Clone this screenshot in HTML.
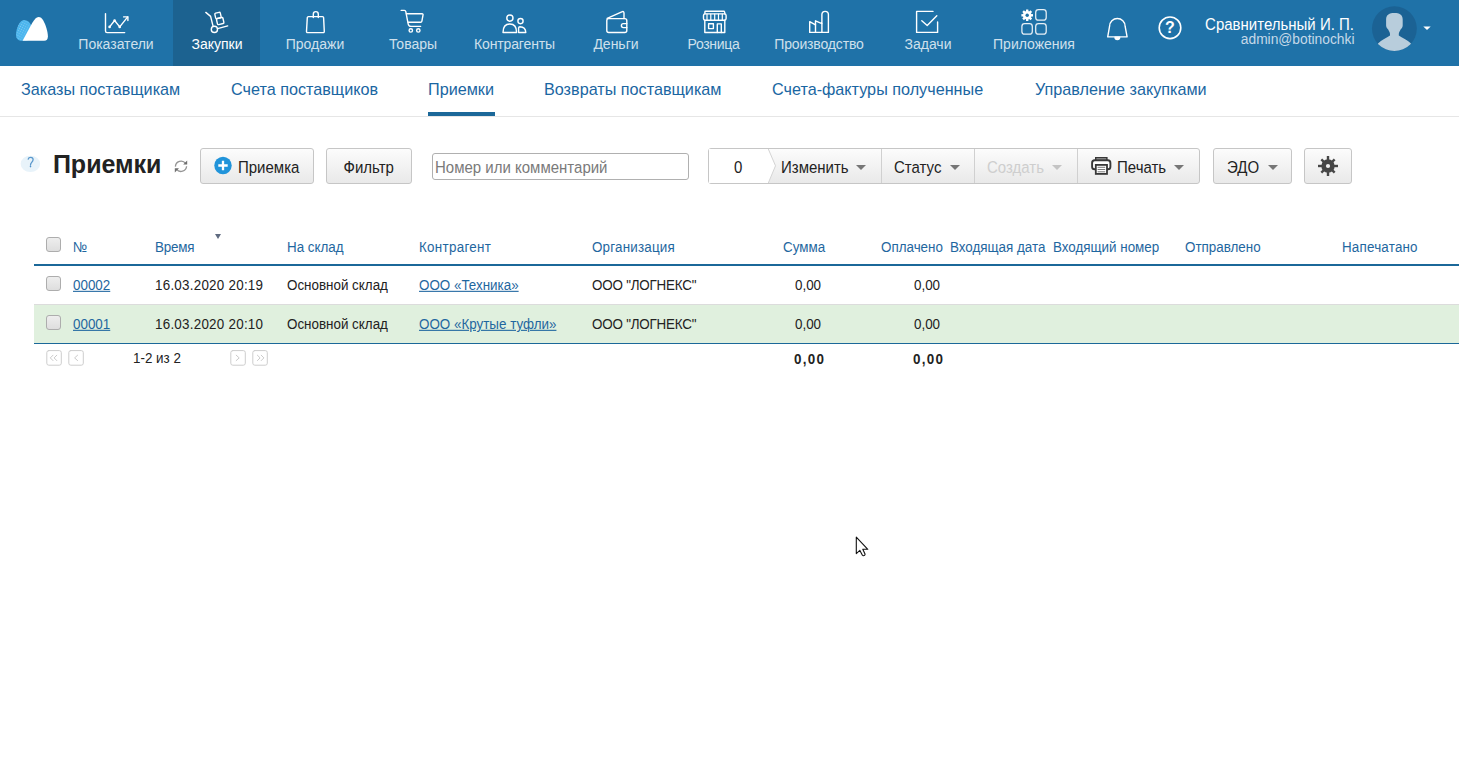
<!DOCTYPE html>
<html><head><meta charset="utf-8">
<style>
*{box-sizing:border-box}
html,body{margin:0;padding:0}
body{width:1459px;height:768px;overflow:hidden;background:#fff;position:relative;font-family:"Liberation Sans",sans-serif;color:#222}
.a{position:absolute;white-space:nowrap}
#hdr{position:absolute;left:0;top:0;width:1459px;height:66px;background:#1f72a8}
#act{position:absolute;left:173px;top:0;width:87px;height:66px;background:#1c6290}
.nt{position:absolute;top:37px;width:140px;text-align:center;font-size:14px;line-height:14px;color:#cfe0ec}
.ic{position:absolute;left:0;top:0}
.sn{position:absolute;top:81px;font-size:16.2px;line-height:16px;color:#1a66a2}
.btn{position:absolute;top:148px;height:36px;border:1px solid #c6c6c6;border-radius:3px;background:linear-gradient(#fcfcfc,#e9e9e9)}
.bt{position:absolute;top:158.5px;font-size:15px;line-height:15px;color:#222;transform:scaleY(1.09);transform-origin:0 3px}
.arr{position:absolute;width:0;height:0;border-left:5px solid transparent;border-right:5px solid transparent;border-top:5px solid #767676}
.th{position:absolute;top:240px;font-size:13.4px;line-height:13px;color:#1f67a0;transform:scaleY(1.08);transform-origin:0 2px}
.td{position:absolute;font-size:13.4px;line-height:13px;color:#222;transform:scaleY(1.08);transform-origin:0 2px}
.lnk{color:#1f67a0;text-decoration:underline}
.cb{position:absolute;left:46px;width:15px;height:15px;border:1px solid #adadad;border-radius:3px;background:linear-gradient(#eeeeee,#dedede)}
.pg{position:absolute;top:350px;width:16px;height:16px;border:1px solid #d8d8d8;border-radius:2px;background:#fff}
</style></head><body>
<div id="hdr"></div>
<div id="act"></div>

<!-- logo -->
<svg class="ic" width="60" height="60" style="left:0;top:0">
  <defs>
    <pattern id="dots" width="2.3" height="2.3" patternUnits="userSpaceOnUse" patternTransform="rotate(30)">
      <rect width="2.3" height="2.3" fill="#4db6ee"/>
      <circle cx="1.15" cy="1.15" r="0.45" fill="#8fd0f4"/>
    </pattern>
  </defs>
  <path d="M23.9 20 C19.8 20 16 28.5 16 35 C16 38.8 18.3 40.8 22 40.8 H26 C29.5 40.8 32 36 32 30 C32 24 28.3 20 23.9 20Z" fill="url(#dots)"/>
  <path d="M38.6 16.9 C36.2 16.9 34.2 19.4 32.2 23 L22.6 40.8 H44.2 C46.6 40.8 47.9 39.2 47.9 36.5 C47.9 31.5 45.6 24.5 43.3 20.4 C41.9 18 40.4 16.9 38.6 16.9 Z" fill="#fff"/>
</svg>

<!-- nav icons -->
<svg class="ic" width="1459" height="66" fill="none" stroke="#fff" stroke-width="1.4" stroke-linecap="round" stroke-linejoin="round">
  <!-- chart -->
  <path d="M105.5 13.6 V31 Q105.5 32.6 107.1 32.6 H124.7"/>
  <path d="M109.6 26.9 L114.6 20.5 L119.7 26.9 L127.7 16.9"/>
  <path d="M123.6 16.9 H127.9 V20.6"/>
  <circle cx="109.6" cy="26.9" r="0.6" fill="#fff"/><circle cx="114.6" cy="20.5" r="0.6" fill="#fff"/><circle cx="119.7" cy="26.9" r="0.6" fill="#fff"/>
  <!-- truck -->
  <path d="M205.8 12.4 L210.6 16.4 L213 25.8"/>
  <circle cx="214.4" cy="29.4" r="3.1"/>
  <path d="M217.6 28.6 L227.7 25.9"/>
  <g transform="rotate(-13 220 18)">
    <rect x="215.8" y="12.3" width="5.6" height="5.6" rx="1"/>
    <rect x="216.2" y="17.9" width="6.6" height="6.2" rx="1"/>
  </g>
  <!-- bag -->
  <path d="M308.4 16.6 H322.6 Q323.5 16.6 323.6 17.6 L324.3 31.4 Q324.4 32.6 323.2 32.6 H307.6 Q306.4 32.6 306.5 31.4 L307.3 17.6 Q307.4 16.6 308.4 16.6 Z"/>
  <path d="M313.3 17.6 V14.2 Q313.3 11.6 315.8 11.6 Q318.3 11.6 318.3 14.2 V17.6"/>
  <!-- cart -->
  <path d="M401.2 10.4 H404.4 Q405.5 10.4 405.8 11.6 L408.1 23.6 Q408.6 26.4 411 26.4 H420.6"/>
  <path d="M406.4 13.8 H422 Q423.3 13.8 423 15.2 L421.9 21.2 Q421.7 22.3 420.6 22.3 H408.2"/>
  <circle cx="410.8" cy="30.4" r="1.7"/><circle cx="418.3" cy="30.4" r="1.7"/>
  <!-- people -->
  <circle cx="509.9" cy="18.1" r="3.1"/>
  <path d="M503 32.5 Q503 24 509.8 24 Q516.6 24 516.6 32.5 Z"/>
  <circle cx="520.5" cy="21.1" r="2.6"/>
  <path d="M518.6 32.5 V28 Q518.6 26.7 520 26.7 Q525.6 26.9 525.8 32.5 Z"/>
  <!-- wallet -->
  <path d="M608.8 18.6 H624.8 Q626.8 18.6 626.8 20.6 V30.5 Q626.8 32.5 624.8 32.5 H608.8 Q606.8 32.5 606.8 30.5 V20.6 Q606.8 18.6 608.8 18.6Z"/>
  <path d="M607.2 18.4 L621.8 11.8 Q623.8 10.9 624 13 V18.6"/>
  <path d="M626.8 23.6 H623.3 Q621.4 23.6 621.4 25.6 Q621.4 27.6 623.3 27.6 H626.8"/>
  <!-- store -->
  <path d="M704.9 13.8 V12 Q704.9 11.3 705.6 11.3 H723.8 Q724.5 11.3 724.6 12 L724.9 13.8"/>
  <rect x="703.5" y="13.9" width="22.6" height="6.3" rx="1.6"/>
  <path d="M707 14.2 V19.9 M710.8 14.2 V19.9 M714.7 14.2 V19.9 M718.5 14.2 V19.9 M722.3 14.2 V19.9" stroke-width="1.2"/>
  <path d="M704.8 20.3 V32.5 H724.8 V20.3"/>
  <rect x="708.6" y="23.7" width="4.8" height="4.9"/>
  <path d="M717.3 32.5 V23.9 H721.3 V32.5"/>
  <!-- factory -->
  <path d="M809.7 32.4 V21.6 L815.5 24.8 V20.8 L821.9 23.6 V14.6 Q821.9 11.4 825.1 11.4 Q828.4 11.4 828.4 14.6 V32.4 Z"/>
  <path d="M815.5 24.8 V32.4 M821.9 23.6 V32.4"/>
  <!-- tasks -->
  <path d="M933 11.4 H916.6 V32.4 H937.6 V22"/>
  <path d="M921.8 20.8 L927.2 25.6 L936.8 15.8"/>
  <!-- apps -->
  <g stroke-width="1.25" stroke="#e8f0f6"><rect x="1035.7" y="9.7" width="10.5" height="10.5" rx="2.8"/>
  <rect x="1021.9" y="23.7" width="10.4" height="10.5" rx="2.8"/>
  <rect x="1035.7" y="23.7" width="10.5" height="10.5" rx="2.8"/></g>
  <!-- bell -->
  <path d="M1107.7 36.9 L1109.6 26.2 A7.75 7.75 0 0 1 1125.1 26.2 L1127.1 36.9 Z"/>
  <path d="M1115 37.2 A2.35 2.3 0 0 0 1119.7 37.2 Z" fill="#fff"/>
  <!-- help -->
  <circle cx="1170" cy="27.8" r="10.8" stroke-width="1.6"/>
</svg>
<!-- gear small in apps -->
<svg class="ic" width="1459" height="66" style="pointer-events:none">
  <g transform="translate(1027.2 15.3)" fill="#fff">
    <circle r="4.3"/>
    <g><rect x="-1.2" y="-5.8" width="2.4" height="11.6" rx="0.3"/><rect x="-1.2" y="-5.8" width="2.4" height="11.6" transform="rotate(45)"/><rect x="-1.2" y="-5.8" width="2.4" height="11.6" transform="rotate(90)"/><rect x="-1.2" y="-5.8" width="2.4" height="11.6" transform="rotate(135)"/></g>
    <circle r="1.7" fill="#1f72a8"/>
  </g>
  <text x="1170" y="33" font-family="Liberation Sans" font-weight="bold" font-size="16" fill="#fff" text-anchor="middle">?</text>
  <!-- avatar -->
  <circle cx="1394.4" cy="28.6" r="22.4" fill="#1b6294"/>
  <clipPath id="avc"><circle cx="1394.4" cy="28.6" r="22.4"/></clipPath>
  <g clip-path="url(#avc)" fill="#b8cddc">
    <path d="M1394.4 13.1 C1389.4 13.1 1386.1 14.8 1386.1 19.5 L1386.1 25.4 C1386.1 27.4 1387.4 28.4 1388.2 29.6 C1389 31.2 1389.9 32.4 1390 34 L1390 35.6 C1386.6 37.8 1381.6 40 1378 43.6 L1378 56 H1411 V43.6 C1407.2 40 1402.2 37.8 1398.8 35.6 L1398.8 34 C1398.9 32.4 1399.8 31.2 1400.6 29.6 C1401.4 28.4 1402.7 27.4 1402.7 25.4 L1402.7 19.5 C1402.7 14.8 1399.4 13.1 1394.4 13.1 Z"/>
  </g>
  <path d="M1423.3 26.4 H1430.7 L1427 30.1 Z" fill="#fff"/>
</svg>

<div class="nt" style="left:46px">Показатели</div>
<div class="nt" style="left:147px;color:#fff">Закупки</div>
<div class="nt" style="left:245px">Продажи</div>
<div class="nt" style="left:343px">Товары</div>
<div class="nt" style="left:444.5px;letter-spacing:-0.15px">Контрагенты</div>
<div class="nt" style="left:546px">Деньги</div>
<div class="nt" style="left:643.5px;letter-spacing:-0.3px">Розница</div>
<div class="nt" style="left:749px;letter-spacing:-0.15px">Производство</div>
<div class="nt" style="left:858px">Задачи</div>
<div class="nt" style="left:964px">Приложения</div>

<div class="a" style="right:105px;top:15.6px;font-size:15px;line-height:15px;color:#fff;transform:scaleY(1.07);transform-origin:0 2px">Сравнительный И. П.</div>
<div class="a" style="right:104.5px;top:33px;font-size:13.8px;line-height:14px;color:#c5d9e8">admin@botinochki</div>

<!-- subnav -->
<div class="sn" style="left:21px">Заказы поставщикам</div>
<div class="sn" style="left:231px">Счета поставщиков</div>
<div class="sn" style="left:428px">Приемки</div>
<div class="sn" style="left:544px">Возвраты поставщикам</div>
<div class="sn" style="left:772px">Счета-фактуры полученные</div>
<div class="sn" style="left:1035px">Управление закупками</div>
<div class="a" style="left:0;top:116px;width:1459px;height:1px;background:#e6e6e6"></div>
<div class="a" style="left:428px;top:112px;width:67px;height:4px;background:#1b6899"></div>

<!-- toolbar -->
<svg class="ic" style="left:16px;top:150px" width="30" height="28">
  <ellipse cx="14.4" cy="13.9" rx="9.7" ry="8.2" fill="#e8f3fa"/>
  <path d="M12.2 9.2 Q12.6 7.3 14.7 7.3 Q17.1 7.3 17.1 9.6 Q17.1 11.2 15.6 12.4 Q14.5 13.3 14.5 15.2" fill="none" stroke="#5a98cc" stroke-width="1.3" stroke-linecap="round"/>
  <circle cx="14.5" cy="16.6" r="0.8" fill="#4f90c8"/>
</svg>
<div class="a" style="left:52.9px;top:152px;font-size:25px;line-height:24px;font-weight:bold;color:#222">Приемки</div>
<svg class="ic" style="left:168px;top:152px" width="26" height="26" fill="none">
  <g stroke="#959595" stroke-width="1.3">
    <path d="M7.4 14.6 A5.7 5.7 0 0 1 17.6 11.4"/>
    <path d="M18.6 14.2 A5.7 5.7 0 0 1 8.4 17.2"/>
  </g>
  <path d="M19.2 8.6 V12.6 H15.2 Z" fill="#6f6f6f"/>
  <path d="M6.8 20.4 V16.2 H11 Z" fill="#6f6f6f"/>
</svg>

<div class="btn" style="left:200px;width:114px"></div>
<svg class="ic" style="left:213px;top:156px" width="20" height="20">
  <circle cx="10" cy="9.5" r="8.7" fill="#2194da"/>
  <path d="M10 4.8 V14.2 M5.3 9.5 H14.7" stroke="#fff" stroke-width="2.3"/>
</svg>
<div class="bt" style="left:238px">Приемка</div>

<div class="btn" style="left:326px;width:86px"></div>
<div class="bt" style="left:343.5px">Фильтр</div>

<div class="a" style="left:432px;top:153px;width:257px;height:27px;border:1px solid #b0b0b0;border-radius:3px;background:#fff"></div>
<div class="bt" style="left:435px;color:#7a7a7a">Номер или комментарий</div>

<!-- grouped toolbar -->
<div class="btn" style="left:708px;width:492px"></div>
<svg class="ic" style="left:709px;top:149px" width="68" height="34">
  <path d="M0 0 H59.3 L66.5 16.8 L59.3 34 H0 Z" fill="#fff"/>
  <path d="M59.3 0 L66.5 16.8 L59.3 34" fill="none" stroke="#d4d4d4" stroke-width="1"/>
</svg>
<div class="bt" style="left:734px">0</div>
<div class="bt" style="left:781px">Изменить</div>
<div class="arr" style="left:856.2px;top:164.8px"></div>
<div class="a" style="left:881px;top:149px;width:1px;height:34px;background:#d0d0d0"></div>
<div class="bt" style="left:894px">Статус</div>
<div class="arr" style="left:949.5px;top:164.8px"></div>
<div class="a" style="left:974px;top:149px;width:1px;height:34px;background:#d0d0d0"></div>
<div class="bt" style="left:987px;color:#cecece">Создать</div>
<div class="arr" style="left:1052.2px;top:164.8px;border-top-color:#c4c4c4"></div>
<div class="a" style="left:1077px;top:149px;width:1px;height:34px;background:#d0d0d0"></div>
<svg class="ic" style="left:1086px;top:152px" width="30" height="28">
  <rect x="9.7" y="5.7" width="11.2" height="3.6" fill="#b4b4b4" stroke="#383838" stroke-width="1.4"/>
  <rect x="6.1" y="8.3" width="18.3" height="9" rx="2.6" fill="#fff" stroke="#383838" stroke-width="1.9"/>
  <rect x="9.8" y="12.9" width="11.2" height="9" fill="#fff" stroke="#383838" stroke-width="1.8"/>
  <path d="M11.6 15.3 H19.2 M11.6 17.5 H19.2 M11.6 19.8 H19.2" stroke="#6a6a6a" stroke-width="0.9"/>
</svg>
<div class="bt" style="left:1117px">Печать</div>
<div class="arr" style="left:1174.2px;top:164.8px"></div>

<div class="btn" style="left:1213px;width:79px"></div>
<div class="bt" style="left:1227px">ЭДО</div>
<div class="arr" style="left:1267.6px;top:164.8px"></div>

<div class="btn" style="left:1304px;width:48px"></div>
<svg class="ic" style="left:1317px;top:155px" width="22" height="22">
  <g transform="translate(11 11)" fill="#474747">
    <circle r="6.7"/>
    <rect x="-1.2" y="-10" width="2.4" height="20"/><rect x="-1.2" y="-9.4" width="2.4" height="18.8" transform="rotate(45)"/><rect x="-1.2" y="-10" width="2.4" height="20" transform="rotate(90)"/><rect x="-1.2" y="-9.4" width="2.4" height="18.8" transform="rotate(135)"/>
    <circle r="2.1" fill="#f1f1f1"/>
  </g>
</svg>

<!-- table -->
<div class="cb" style="top:237px"></div>
<div class="th" style="left:73px">№</div>
<div class="th" style="left:155px;letter-spacing:-0.2px">Время</div>
<div class="arr" style="left:215px;top:234px;border-left-width:3.6px;border-right-width:3.6px;border-top:5px solid #5f6b80"></div>
<div class="th" style="left:287px">На склад</div>
<div class="th" style="left:419px;letter-spacing:0.3px">Контрагент</div>
<div class="th" style="left:592px;letter-spacing:0.2px">Организация</div>
<div class="th" style="left:783px">Сумма</div>
<div class="th" style="left:881px">Оплачено</div>
<div class="th" style="left:950px">Входящая дата</div>
<div class="th" style="left:1053px">Входящий номер</div>
<div class="th" style="left:1185px">Отправлено</div>
<div class="th" style="left:1342px;letter-spacing:0.2px">Напечатано</div>
<div class="a" style="left:34px;top:264px;width:1425px;height:2px;background:#1b6899"></div>

<div class="cb" style="top:276px"></div>
<div class="td" style="left:73px;top:278px"><span class="lnk">00002</span></div>
<div class="td" style="left:155px;top:278px;letter-spacing:0.25px">16.03.2020 20:19</div>
<div class="td" style="left:287px;top:278px">Основной склад</div>
<div class="td" style="left:419px;top:278px"><span class="lnk">ООО «Техника»</span></div>
<div class="td" style="left:592px;top:278px;letter-spacing:-0.2px">ООО "ЛОГНЕКС"</div>
<div class="td" style="left:795px;top:278px">0,00</div>
<div class="td" style="left:914px;top:278px">0,00</div>

<div class="a" style="left:34px;top:304px;width:1425px;height:1px;background:#dcdcdc"></div>
<div class="a" style="left:34px;top:305px;width:1425px;height:38px;background:#e0f0de"></div>
<div class="a" style="left:34px;top:343px;width:1425px;height:1px;background:#1b6899"></div>
<div class="cb" style="top:315px"></div>
<div class="td" style="left:73px;top:317px"><span class="lnk">00001</span></div>
<div class="td" style="left:155px;top:317px;letter-spacing:0.25px">16.03.2020 20:10</div>
<div class="td" style="left:287px;top:317px">Основной склад</div>
<div class="td" style="left:419px;top:317px"><span class="lnk">ООО «Крутые туфли»</span></div>
<div class="td" style="left:592px;top:317px;letter-spacing:-0.2px">ООО "ЛОГНЕКС"</div>
<div class="td" style="left:795px;top:317px">0,00</div>
<div class="td" style="left:914px;top:317px">0,00</div>

<svg class="ic" style="left:0;top:340px" width="300" height="32" fill="none" stroke-linecap="round" stroke-linejoin="round">
  <g stroke="#cdcdcd" stroke-width="1">
    <rect x="46.8" y="10.6" width="14.5" height="14.6" rx="2"/>
    <rect x="68.8" y="10.6" width="14.5" height="14.6" rx="2"/>
    <rect x="230.8" y="10.6" width="14.5" height="14.6" rx="2"/>
    <rect x="252.8" y="10.6" width="14.5" height="14.6" rx="2"/>
  </g>
  <g stroke="#c4c4c4" stroke-width="0.9">
    <path d="M53 15.2 L50.3 17.9 L53 20.6 M56.8 15.2 L54.1 17.9 L56.8 20.6"/>
    <path d="M77.6 15.2 L74.6 17.9 L77.6 20.6"/>
    <path d="M236.2 15.2 L239.2 17.9 L236.2 20.6"/>
    <path d="M257.4 15.2 L260.1 17.9 L257.4 20.6 M261.2 15.2 L263.9 17.9 L261.2 20.6"/>
  </g>
</svg>
<div class="td" style="left:133px;top:351px">1-2 из 2</div>
<div class="td" style="left:794px;top:352px;font-weight:bold;letter-spacing:1.3px">0,00</div>
<div class="td" style="left:913px;top:352px;font-weight:bold;letter-spacing:1.3px">0,00</div>

<!-- cursor -->
<svg class="ic" style="left:850px;top:530px" width="24" height="30">
  <path d="M6.3 7.2 V23.6 L9.9 20.4 L12.4 25.2 Q12.9 26 13.8 25.6 L14.6 25.2 Q15.3 24.7 15 23.9 L12.8 19.3 H17.8 Z" fill="#fff" stroke="#111" stroke-width="1.1" stroke-linejoin="round"/>
</svg>
</body></html>
